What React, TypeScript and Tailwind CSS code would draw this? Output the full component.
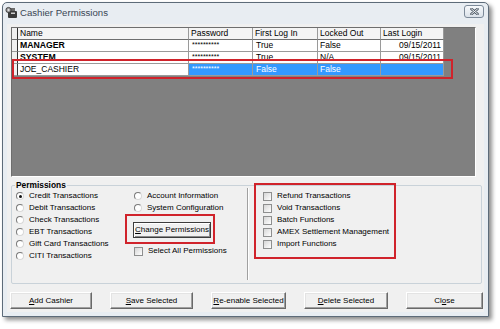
import React from "react";

// Win7-ish dialog: "Cashier Permissions"
const font = "font-['Liberation_Sans',Arial,sans-serif]";

const columns = ["Name", "Password", "First Log In", "Locked Out", "Last Login"];

const rows = [
  { name: "MANAGER", bold: true, first: "True", locked: "False", last: "09/15/2011", selected: false },
  { name: "SYSTEM", bold: true, first: "True", locked: "N/A", last: "09/15/2011", selected: false },
  { name: "JOE_CASHIER", bold: false, first: "False", locked: "False", last: "", selected: true },
];

const leftRadios = [
  { label: "Credit Transactions", checked: true },
  { label: "Debit Transactions", checked: false },
  { label: "Check Transactions", checked: false },
  { label: "EBT Transactions", checked: false },
  { label: "Gift Card Transactions", checked: false },
  { label: "CITI Transactions", checked: false },
];

const extraChecks = [
  "Refund Transactions",
  "Void Transactions",
  "Batch Functions",
  "AMEX Settlement Management",
  "Import Functions",
];

const Radio = ({ label, checked }: { label: string; checked?: boolean }) => (
  <div className="flex h-[12px] items-center gap-[5px]">
    <span className="flex h-[8px] w-[8px] items-center justify-center rounded-full border border-t-[#7a7a7a] border-l-[#7a7a7a] border-r-[#d8d8d8] border-b-[#d8d8d8] bg-white">
      {checked && <span className="h-[3px] w-[3px] rounded-full bg-[#111]" />}
    </span>
    <span>{label}</span>
  </div>
);

const Check = ({ label }: { label: string }) => (
  <div className="flex h-[12px] items-center gap-[5px]">
    <span className="h-[9px] w-[9px] border border-[#8e8f8f] bg-gradient-to-br from-[#d6d6d6] to-white" />
    <span>{label}</span>
  </div>
);

const WinButton = ({
  width,
  children,
}: {
  width: string;
  children: React.ReactNode;
}) => (
  <button
    className={`${width} flex h-[17px] items-center justify-center border border-t-white border-l-white border-r-[#696969] border-b-[#696969] bg-[#f0f0f0] text-[8px] shadow-[inset_-1px_-1px_0_#a0a0a0,inset_1px_1px_0_#e3e3e3] whitespace-nowrap`}
  >
    {children}
  </button>
);

const TitleIcon = () => (
  <svg width="13" height="13" viewBox="0 0 13 13">
    <rect x="3" y="5" width="9" height="7" rx="1" fill="#3b3b3b" />
    <rect x="5" y="2" width="5" height="3" fill="#6b6b6b" />
    <rect x="6" y="6.5" width="4" height="1.5" fill="#cfcfcf" />
    <circle cx="3.5" cy="4" r="2.6" fill="#9a9a9a" stroke="#2f2f2f" strokeWidth="0.8" />
    <circle cx="3.5" cy="4" r="1" fill="#e6e6e6" />
  </svg>
);

export default function App() {
  return (
    <div className={`h-[329px] w-[500px] bg-white pl-[2px] pt-[2px] text-black ${font}`}>
      <div className="flex h-[315px] w-[487px] flex-col rounded-t-[5px] border border-[#5d6b79] bg-[#e8edf2] shadow-[3px_3px_4px_rgba(0,0,0,0.45)]">
        {/* Title bar */}
        <div className="flex h-[21px] items-start pl-[2px] pr-[4px]">
          <div className="mt-[3px]">
            <TitleIcon />
          </div>
          <span className="ml-[2px] mt-[3px] text-[9.6px] leading-[13px] text-[#3a4654]">
            Cashier Permissions
          </span>
          <div className="ml-auto mt-[2px] flex h-[13px] w-[20px] items-center justify-center rounded-[3px] border border-[#7d8a99] bg-gradient-to-b from-[#f7f9fb] to-[#dbe2ea]">
            <svg width="9" height="7" viewBox="0 0 9 7">
              <path d="M1.5 1 L7.5 6 M7.5 1 L1.5 6" stroke="#4f5a66" strokeWidth="2.6" strokeLinecap="round" />
              <path d="M1.5 1 L7.5 6 M7.5 1 L1.5 6" stroke="#f4f6f8" strokeWidth="1" strokeLinecap="round" />
            </svg>
          </div>
        </div>

        {/* Client area */}
        <div className="mx-[4px] mb-[4px] flex flex-1 flex-col bg-[#f0f0f0] text-[8px] leading-[12px]">
          {/* Grid */}
          <div className="relative ml-[4px] mt-[3px] h-[150px] w-[465px] border border-t-[#6e6e6e] border-l-[#6e6e6e] border-r-white border-b-white bg-[#808080]">
            <div className="grid w-[432px] grid-cols-[6px_171px_64px_65px_63px_63px] text-[8.5px]">
              <div className="h-[12px] border-r border-b border-r-[#303030] border-b-[#6e6e6e] bg-[#f0f0f0]" />
              {columns.map((c) => (
                <div
                  key={c}
                  className="h-[12px] overflow-hidden whitespace-nowrap border-r border-b border-r-[#9a9a9a] border-b-[#6e6e6e] bg-[#f4f4f4] pl-[2px] leading-[11px]"
                >
                  {c}
                </div>
              ))}
              {rows.map((r) => {
                const cell = r.selected
                  ? "bg-[#3399ff] text-white border-r-[#9a9a9a] border-b-[#9a9a9a]"
                  : "bg-white border-r-[#9a9a9a] border-b-[#9a9a9a]";
                return (
                  <React.Fragment key={r.name}>
                    <div className="h-[12px] border-r border-b border-r-[#303030] border-b-[#9a9a9a] bg-[#f0f0f0]" />
                    <div
                      className={`h-[12px] overflow-hidden whitespace-nowrap border-r border-b border-r-[#9a9a9a] border-b-[#9a9a9a] bg-white pl-[2px] leading-[11px] ${
                        r.bold ? "font-bold text-[8.7px]" : ""
                      }`}
                    >
                      {r.name}
                    </div>
                    <div className={`h-[12px] overflow-hidden whitespace-nowrap border-r border-b pl-[3px] text-[7px] leading-[9px] ${cell}`}>
                      **********
                    </div>
                    <div className={`h-[12px] border-r border-b pl-[3px] leading-[11px] ${cell}`}>{r.first}</div>
                    <div className={`h-[12px] border-r border-b pl-[2px] leading-[11px] ${cell}`}>{r.locked}</div>
                    <div className={`h-[12px] border-r border-b pr-[2px] text-right leading-[11px] ${cell}`}>{r.last}</div>
                  </React.Fragment>
                );
              })}
            </div>
            {/* annotation around the selected row */}
            <div className="absolute left-0 top-[31px] h-[20px] w-[441px] border-2 border-[#d0232b]" />
          </div>

          {/* Permissions group */}
          <div className="relative ml-[4px] mt-[8px] h-[99px] w-[471px] rounded-[2px] border border-[#c9d2d9]">
            <span className="absolute -top-[7px] left-[3px] bg-[#f0f0f0] px-[1px] text-[8.4px] font-bold">
              Permissions
            </span>
            <div className="flex items-start">
              <div className="w-[122px] pl-[4px] pt-[4px]">
                {leftRadios.map((r) => (
                  <Radio key={r.label} label={r.label} checked={r.checked} />
                ))}
              </div>
              <div className="w-[113px] pt-[4px]">
                <Radio label="Account Information" />
                <Radio label="System Configuration" />
                <div className="-ml-[9px] h-[30px] w-[90px] border-2 border-[#d0232b] pl-[6px] pt-[6px]">
                  <button className="flex h-[16px] w-[78px] items-center justify-center border border-[#3c3c3c] bg-[#f0f0f0] text-[8px] shadow-[inset_1px_1px_0_white,inset_-1px_-1px_0_#8a8a8a] whitespace-nowrap">
                    <span className="underline">C</span>hange Permissions
                  </button>
                </div>
                <div className="mt-[1px]">
                  <Check label="Select All Permissions" />
                </div>
              </div>
              <div className="mt-[2px] h-[92px] w-[2px] border-l border-r border-l-[#a0a0a0] border-r-white" />
              <div className="-mt-[3px] ml-[5px] h-[76px] w-[142px] border-2 border-[#d0232b] pl-[7px] pt-[5px]">
                {extraChecks.map((c) => (
                  <Check key={c} label={c} />
                ))}
              </div>
            </div>
          </div>

          {/* Bottom buttons */}
          <div className="ml-[3px] mt-[8px] flex gap-[18px]">
            <WinButton width="w-[82px]">
              <span className="underline">A</span>dd Cashier
            </WinButton>
            <WinButton width="w-[83px]">
              <span className="underline">S</span>ave Selected
            </WinButton>
            <WinButton width="w-[75px]">
              <span className="underline">R</span>e-enable Selected
            </WinButton>
            <WinButton width="w-[84px]">
              <span className="underline">D</span>elete Selected
            </WinButton>
            <WinButton width="w-[77px]">
              Cl<span className="underline">o</span>se
            </WinButton>
          </div>
        </div>
      </div>
    </div>
  );
}
